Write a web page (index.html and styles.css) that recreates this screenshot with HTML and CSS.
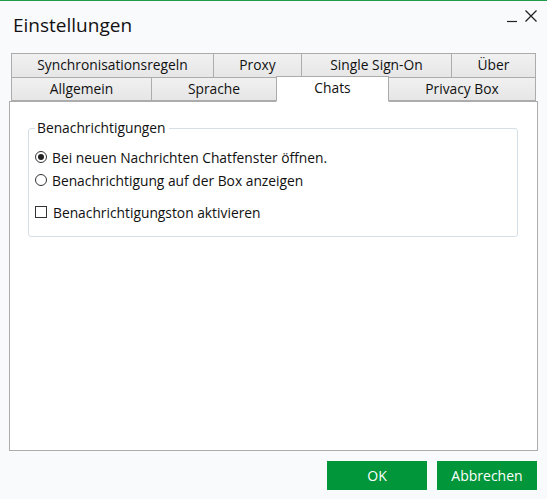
FILE: index.html
```html
<!DOCTYPE html>
<html lang="de">
<head>
<meta charset="utf-8">
<link rel="stylesheet" href="styles.css">
</head>
<body>
<div class="window">
  <div class="titlebar">
    <div class="title">Einstellungen</div>
    <div class="controls">
      <svg class="ctl-min" width="12" height="24" viewBox="0 0 12 24"><line x1="1" y1="20.5" x2="11" y2="20.5" stroke="#222" stroke-width="1.2"/></svg>
      <svg class="ctl-close" width="14" height="24" viewBox="0 0 14 24"><path d="M1.5 9.5 L12.5 20.5 M12.5 9.5 L1.5 20.5" stroke="#222" stroke-width="1.3" fill="none"/></svg>
    </div>
  </div>
  <div class="tabs">
    <div class="tabrow">
      <div class="tab w-sync">Synchronisationsregeln</div>
      <div class="tab w-proxy">Proxy</div>
      <div class="tab w-sso">Single Sign-On</div>
      <div class="tab w-uber">Über</div>
    </div>
    <div class="tabrow row2">
      <div class="tab w-allg">Allgemein</div>
      <div class="tab w-spr">Sprache</div>
      <div class="tab w-chats selected">Chats</div>
      <div class="tab w-priv">Privacy Box</div>
    </div>
  </div>
  <div class="panel">
    <fieldset class="group">
      <legend class="legend">Benachrichtigungen</legend>
      <div class="option"><span class="radio checked"></span><span class="label">Bei neuen Nachrichten Chatfenster öffnen.</span></div>
      <div class="option"><span class="radio"></span><span class="label">Benachrichtigung auf der Box anzeigen</span></div>
      <div class="option check-row"><span class="checkbox"></span><span class="label">Benachrichtigungston aktivieren</span></div>
    </fieldset>
  </div>
  <div class="footer">
    <button class="btn">OK</button>
    <button class="btn">Abbrechen</button>
  </div>
</div>
</body>
</html>
```

FILE: styles.css
```css
* { box-sizing: border-box; }
html, body { margin: 0; padding: 0; }
body {
  background: #f9fafc;
  font-family: "Open Sans", "Noto Sans", "Liberation Sans", sans-serif;
  color: #111;
  width: 547px;
  height: 499px;
  overflow: hidden;
}
.window {
  height: 499px;
  border-top: 1px solid #1f9a4a;
  display: flex;
  flex-direction: column;
}
.titlebar {
  height: 52px;
  display: flex;
  justify-content: space-between;
  align-items: flex-start;
  padding-left: 13px;
  padding-right: 9px;
}
.title {
  font-size: 19px;
  margin-top: 11px;
  line-height: 26px;
  color: #111;
}
.controls {
  display: flex;
  gap: 6px;
}
.tabs {
  margin-left: 11px;
  display: flex;
  flex-direction: column;
  position: relative;
  z-index: 2;
}
.tabrow { display: flex; }
.row2 { margin-top: -1px; }
.tab {
  height: 25px;
  border: 1px solid #acacac;
  background: linear-gradient(#f1f1f1, #e6e6e6);
  font-size: 13.8px;
  line-height: 22px;
  text-align: center;
  color: #111;
  white-space: nowrap;
}
.tab + .tab { margin-left: -1px; }
.row2 .tab { height: 24px; }
.tab.selected {
  background: #fff;
  border-bottom-color: #fff;
  height: 26px;
  margin-top: -1px;
  line-height: 21px;
}
.w-sync { width: 203px; }
.w-proxy { width: 89px; }
.w-sso { width: 151px; }
.w-uber { width: 85px; }
.w-allg { width: 141px; }
.w-spr { width: 126px; }
.w-chats { width: 113px; }
.w-priv { width: 148px; }
.panel {
  margin-left: 9px;
  margin-top: -1px;
  width: 529px;
  height: 350px;
  background: #fff;
  border: 1px solid #acacac;
  padding: 17px 0 0 18px;
  position: relative;
  z-index: 1;
}
.group {
  margin: 0;
  width: 490px;
  height: 118px;
  border: 1px solid #d5dfe5;
  border-radius: 3px;
  padding: 8px 0 0 6px;
}
.legend {
  font-size: 13.8px;
  padding: 0 3px 0 2px;
  margin-left: 0;
  line-height: 18px;
}
.option {
  display: flex;
  align-items: center;
  height: 24px;
  font-size: 13.8px;
}
.option + .option { margin-top: -1px; }
.option.check-row { margin-top: 8px; }
.radio {
  width: 12px;
  height: 12px;
  border: 1px solid #333;
  border-radius: 50%;
  margin-right: 5px;
  display: flex;
  align-items: center;
  justify-content: center;
  flex: none;
}
.radio.checked::after {
  content: "";
  width: 6px;
  height: 6px;
  border-radius: 50%;
  background: #222;
}
.checkbox {
  width: 12px;
  height: 12px;
  border: 1px solid #333;
  margin-right: 6px;
  flex: none;
}
.footer {
  display: flex;
  justify-content: flex-end;
  gap: 10px;
  padding-right: 10px;
  margin-top: 10px;
}
.btn {
  width: 100px;
  height: 29px;
  background: #009639;
  color: #fff;
  border: none;
  font-family: inherit;
  font-size: 14px;
  padding: 0;
}
```
